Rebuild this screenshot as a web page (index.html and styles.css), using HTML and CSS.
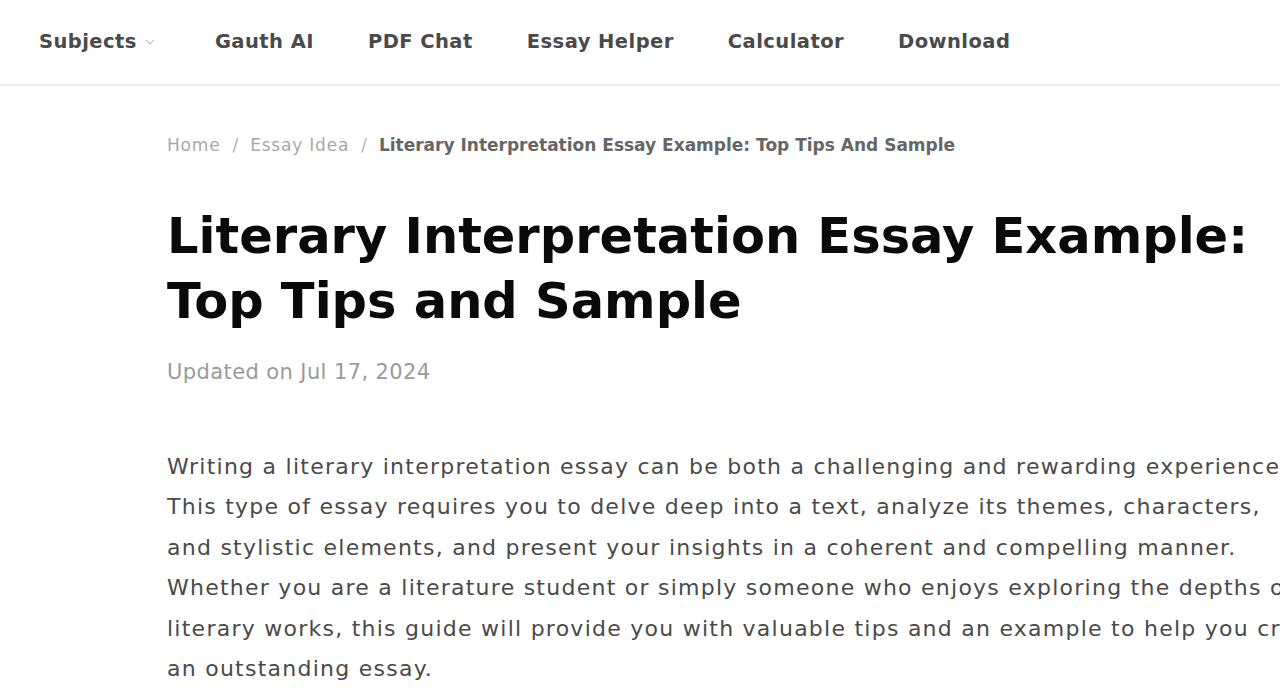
FILE: index.html
```html
<!DOCTYPE html>
<html lang="en">
<head>
<meta charset="utf-8">
<title>Literary Interpretation Essay Example</title>
<link rel="stylesheet" href="styles.css">
</head>
<body>
<header class="topbar">
  <nav class="nav">
    <a class="nav-item subjects">Subjects
      <svg class="chev" width="10" height="6" viewBox="0 0 10 6"><path d="M1 1l4 4 4-4" fill="none" stroke="#c4c4c4" stroke-width="1.2"/></svg>
    </a>
    <a class="nav-item">Gauth AI</a>
    <a class="nav-item">PDF Chat</a>
    <a class="nav-item">Essay Helper</a>
    <a class="nav-item">Calculator</a>
    <a class="nav-item">Download</a>
  </nav>
</header>
<main class="article">
  <div class="crumbs">
    <a class="crumb">Home</a><span class="sep">/</span><a class="crumb">Essay Idea</a><span class="sep">/</span><span class="crumb current">Literary Interpretation Essay Example: Top Tips And Sample</span>
  </div>
  <h1 class="title">Literary Interpretation Essay Example: Top Tips and Sample</h1>
  <div class="updated">Updated on Jul 17, 2024</div>
  <p class="lead">Writing a literary interpretation essay can be both a challenging and rewarding experience.<br>
This type of essay requires you to delve deep into a text, analyze its themes, characters,<br>
and stylistic elements, and present your insights in a coherent and compelling manner.<br>
Whether you are a literature student or simply someone who enjoys exploring the depths of<br>
literary works, this guide will provide you with valuable tips and an example to help you craft<br>
an outstanding essay.</p>
</main>
</body>
</html>
```
FILE: styles.css
```css
html, body {
  margin: 0;
  padding: 0;
  background: #fff;
  overflow: hidden;
}
body {
  font-family: "DejaVu Sans", Inter, sans-serif;
  width: 1280px;
  height: 700px;
}
.topbar {
  height: 84px;
  border-bottom: 2px solid #ececec;
  display: flex;
  align-items: center;
  padding-left: 39px;
}
.nav {
  display: flex;
  align-items: center;
  gap: 54px;
  margin-top: -2px;
}
.nav-item {
  font-size: 19.5px;
  font-weight: 700;
  color: #4a4a4a;
  letter-spacing: 0.45px;
  display: flex;
  align-items: center;
}
.subjects { gap: 8px; margin-right: 6px; }
.chev { margin-top: 2px; }
.article {
  width: 1140px;
  margin-left: 167px;
  padding-top: 48px;
}
.crumbs {
  font-size: 17px;
  line-height: 22px;
  color: #a8a8a8;
  display: flex;
  align-items: center;
  height: 22px;
  letter-spacing: 0.8px;
}
.sep { margin: 0 12px; color: #b0b0b0; letter-spacing: 0; }
.crumb.current { color: #666; font-weight: 700; letter-spacing: 0; }
.title {
  margin: 48px 0 0;
  font-size: 49.5px;
  line-height: 65px;
  font-weight: 700;
  color: #0a0a0a;
}
.updated {
  margin-top: 26px;
  font-size: 21px;
  line-height: 24px;
  color: #9a9a9a;
  letter-spacing: 0.4px;
}
.lead {
  margin: 63px 0 0;
  font-size: 22px;
  line-height: 40.4px;
  color: #4a4a4a;
  letter-spacing: 1.25px;
  white-space: nowrap;
}
```
